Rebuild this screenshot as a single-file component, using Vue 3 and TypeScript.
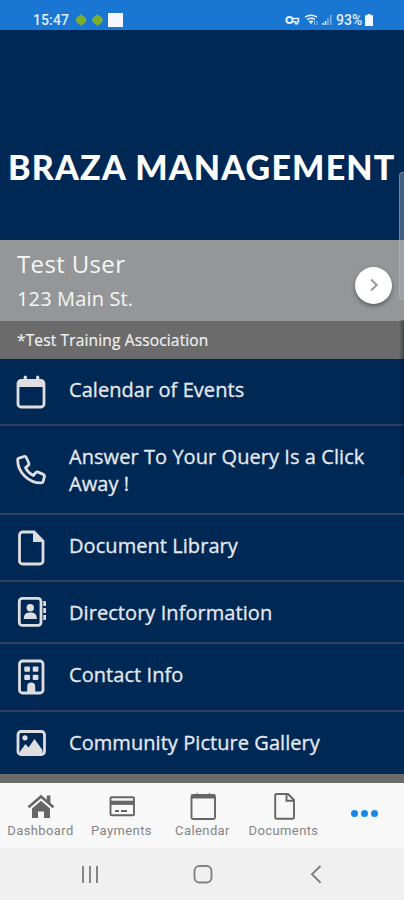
<script setup lang="ts">
interface MenuRow {
  icon: 'calendar' | 'phone' | 'document' | 'directory' | 'building' | 'picture'
  label: string
  height: number
}

const rows: MenuRow[] = [
  { icon: 'calendar', label: 'Calendar of Events', height: 67 },
  { icon: 'phone', label: 'Answer To Your Query Is a Click Away !', height: 89 },
  { icon: 'document', label: 'Document Library', height: 67 },
  { icon: 'directory', label: 'Directory Information', height: 62 },
  { icon: 'building', label: 'Contact Info', height: 68 },
  { icon: 'picture', label: 'Community Picture Gallery', height: 62 },
]

const tabs = [
  { icon: 'home', label: 'Dashboard' },
  { icon: 'card', label: 'Payments' },
  { icon: 'calendar', label: 'Calendar' },
  { icon: 'document', label: 'Documents' },
]
</script>

<template>
  <div class="phone">
    <header class="status">
      <span class="time">15:47</span>
      <svg class="leaves" viewBox="0 0 30 14" fill="#7dad2c">
        <path d="M6 1l2 2 2 1 1.500 3-1.500 3-2 1-2 2-2-2-2-1-1.500-3L2 4l2-1z" />
        <path d="M22.500 1l2 2 2 1 1.500 3-1.500 3-2 1-2 2-2-2-2-1-1.500-3 1.500-3 2-1z" />
      </svg>
      <i class="square"></i>
      <svg class="signals" viewBox="0 0 50 14" fill="none" stroke="#e3efff">
        <circle cx="4.500" cy="7" r="3.100" stroke-width="2" />
        <path d="M7 5.500h6.500v3.200h-1v2h-2v-2H7.500" stroke-width="1.500" />
        <path d="M20 4.200Q26 .2 32 4.200M22 6.600q4-2.600 8 0" stroke-width="1.500" />
        <path d="M24 8h4l-2 2.700z" fill="#e3efff" stroke-width="1" />
        <path d="M29.500 8v4M32 8v4" stroke-width="1" opacity=".6" />
        <path d="M38 12v-2M40.500 12V8" stroke-width="1.600" />
        <path d="M43 12V5M45.800 12V2" stroke-width="1.600" opacity=".5" />
      </svg>
      <span class="charge">93%</span>
      <svg class="battery" viewBox="0 0 8 12" fill="#f3f8ff"><path d="M2.500 0h3v1.300H8V12H0V1.300h2.500z" /></svg>
    </header>

    <section class="brand"><h1>BRAZA MANAGEMENT</h1></section>

    <section class="user">
      <div class="who">
        <div class="name">Test User</div>
        <div class="street">123 Main St.</div>
      </div>
      <button class="go" aria-label="Open">
        <svg viewBox="0 0 12 16"><path d="M3 2.500L8.700 8 3 13.500" fill="none" stroke="#999" stroke-width="2" /></svg>
      </button>
    </section>
    <div class="assoc">*Test Training Association</div>

    <ul class="menu">
      <li v-for="row in rows" :key="row.label" :style="{ height: row.height + 'px' }">
        <svg class="ico" viewBox="0 0 30 36" fill="none" stroke="#dedee0" stroke-width="2.800">
          <template v-if="row.icon === 'calendar'">
            <rect x="2" y="6.500" width="26" height="26.500" rx="3" />
            <path d="M2 6h26v7H2z" fill="#dedee0" stroke="none" />
            <path d="M9.300 3V7M21.700 3V7" stroke-width="3.200" stroke-linecap="round" />
          </template>
          <path
            v-else-if="row.icon === 'phone'"
            stroke-linejoin="round"
            d="M3 6.200L8 4.500Q9.600 4 10.300 5.500L12.800 11Q13.300 12.400 12.200 13.400L9.500 15.700Q12 21 17.400 23.500L19.700 20.700Q20.700 19.500 22.100 20.100L27.300 22.400Q28.800 23.100 28.400 24.700L27.200 29.300Q26.800 30.900 25.200 30.900C12.500 30.900 1.500 20 1.700 7.800Q1.700 6.600 3 6.200Z"
          />
          <template v-else-if="row.icon === 'document'">
            <path d="M6.500 2H18l9 9v20a3 3 0 0 1-3 3H6.500a3 3 0 0 1-3-3V5a3 3 0 0 1 3-3z" />
            <path d="M17 1.500v10.500h10.500z" fill="#dedee0" stroke="none" />
          </template>
          <template v-else-if="row.icon === 'directory'">
            <rect x="3.300" y="4.400" width="21.700" height="27" rx="3" />
            <g fill="#dedee0" stroke="none">
              <circle cx="14.300" cy="13.800" r="3.700" />
              <path d="M7.700 25q0-6.500 5.300-6.500h2.600q5.300 0 5.300 6.500z" />
              <path d="M27.300 7H29q1 0 1 1v4h-2.700zM27.300 14H30v5h-2.700zM27.300 21H30v4q0 1-1 1h-1.700z" />
            </g>
          </template>
          <template v-else-if="row.icon === 'building'">
            <rect x="3.500" y="2" width="23.500" height="32" rx="3" />
            <g fill="#dedee0" stroke="none">
              <rect x="8.300" y="7.500" width="5.700" height="5.200" rx="1" />
              <rect x="16.700" y="7.500" width="5.700" height="5.200" rx="1" />
              <rect x="8.300" y="15.800" width="5.700" height="5.200" rx="1" />
              <rect x="16.700" y="15.800" width="5.700" height="5.200" rx="1" />
              <path d="M11.200 34v-6.500a4 4 0 0 1 8 0V34z" />
            </g>
          </template>
          <template v-else>
            <rect x="2" y="6.500" width="26.500" height="23" rx="3" />
            <g fill="#dedee0" stroke="none">
              <circle cx="9" cy="12.800" r="2.600" />
              <path d="M4 26.500l5.500-7.500 3 3.500 6-8.500 8 11v3H4z" />
            </g>
          </template>
        </svg>
        <span>{{ row.label }}</span>
      </li>
    </ul>

    <nav class="tabs">
      <div v-for="tab in tabs" :key="tab.label" class="tab">
        <svg viewBox="0 0 28 28" fill="none" stroke="#666" stroke-width="1.900">
          <template v-if="tab.icon === 'home'">
            <path d="M1.500 15.300L14 4.500l12.500 10.800" stroke-width="2.600" />
            <path d="M19.800 3.500h3.600v8l-3.600-3z" fill="#666" stroke="none" />
            <path d="M14 8.800l9 7.700V26h-6v-6.500h-6V26H5v-9.500z" fill="#666" stroke="none" />
          </template>
          <template v-else-if="tab.icon === 'card'">
            <rect x="2.500" y="5.300" width="23.500" height="18" rx="1" />
            <path d="M2.500 10.800H26" stroke-width="4.200" />
            <path d="M7 19h4M13 19h6" stroke-width="2" />
          </template>
          <template v-else-if="tab.icon === 'calendar'">
            <rect x="2.500" y="3" width="23.500" height="24" rx="1.500" />
            <path d="M2.500 4.500H26" stroke-width="4" />
            <path d="M8 .8v3M20.500 .8v3" stroke-width="1.600" opacity=".6" />
          </template>
          <template v-else>
            <path d="M6.500 2H18l6 6v17q0 1.800-1.800 1.800H6.500q-1.300 0-1.300-1.800V3.800Q5.200 2 6.500 2z" />
            <path d="M16.500 2v6.800H24" />
          </template>
        </svg>
        <span>{{ tab.label }}</span>
      </div>
      <div class="more"><i></i><i></i><i></i></div>
    </nav>

    <footer class="system">
      <svg viewBox="0 0 404 52" fill="none" stroke="#808080" stroke-width="1.900">
        <path d="M83 18v17M90 18v17M97 18v17" />
        <rect x="194.500" y="18" width="17" height="16.500" rx="5" />
        <path d="M320.500 18l-8.500 8.300 8.500 8.400" />
      </svg>
    </footer>
    <div class="edge-handle"></div>
    <div class="edge-shade"></div>
  </div>
</template>

<style>
body { margin: 0; }
</style>

<style scoped>
* { box-sizing: border-box; }
.phone {
  position: relative;
  width: 404px;
  height: 900px;
  overflow: hidden;
  display: flex;
  flex-direction: column;
  background: #002855;
  font-family: "Open Sans", "Noto Sans", sans-serif;
  color: #e6e8ee;
}
.status {
  height: 30px;
  flex: none;
  display: flex;
  align-items: center;
  padding: 9px 31px 0 33px;
  background: #1976d2;
  font-family: Roboto, sans-serif;
  font-weight: 500;
  font-size: 14px;
  line-height: 20px;
  color: #e3efff;
}
.time { width: 36px; letter-spacing: .1px; }
.leaves { width: 30px; height: 14px; margin-left: 6px; }
.square { width: 15px; height: 14px; margin-left: 3px; background: #f5f9ff; }
.signals { width: 50px; height: 14px; margin-left: auto; }
.charge { width: 28px; margin-left: 1px; letter-spacing: 0; }
.battery { width: 8px; height: 12px; margin-left: 1px; }
.brand {
  height: 210px;
  flex: none;
  padding: 115.500px 0 0 8px;
}
h1 {
  margin: 0;
  font: 900 34px/42px Lato, sans-serif;
  letter-spacing: 1.200px;
  white-space: nowrap;
  color: #fff;
}
.user {
  height: 81px;
  flex: none;
  display: flex;
  justify-content: space-between;
  align-items: center;
  padding: 0 12px 0 17px;
  background: #949698;
  color: #f6f6f6;
}
.name { font-size: 24px; line-height: 37px; letter-spacing: .35px; }
.street { font-size: 20px; line-height: 34px; letter-spacing: .15px; }
.go {
  width: 37px;
  height: 37px;
  margin-top: 9px;
  padding: 0;
  border: 0;
  border-radius: 50%;
  display: grid;
  place-items: center;
  background: #fff;
  box-shadow: 0 2px 4px rgba(0, 0, 0, .4);
}
.go svg { width: 12px; height: 16px; }
.assoc {
  height: 38px;
  flex: none;
  padding-left: 17px;
  background: #6b6b6b;
  color: #f1f1f1;
  font-size: 15.500px;
  letter-spacing: .15px;
  line-height: 38px;
  -webkit-text-stroke: .2px;
}
.menu {
  flex: none;
  margin: 0;
  padding: 0;
  list-style: none;
}
.menu li {
  display: flex;
  align-items: center;
  padding: 0 30px 0 16px;
  border-bottom: 2px solid #343f60;
}
.menu li:last-child { border-bottom: 0; }
.ico { width: 30px; height: 36px; flex: none; }
.menu span {
  align-self: flex-start;
  margin-left: 23px;
  padding-top: 17px;
  font-size: 20px;
  line-height: 27px;
  letter-spacing: .06px;
  -webkit-text-stroke: .3px;
}
.tabs {
  height: 74px;
  flex: none;
  display: flex;
  padding-top: 9px;
  border-top: 9px solid #6b6b6b;
  background: #f8f8f8;
  font-family: Roboto, sans-serif;
  color: #858585;
}
.tab {
  width: 81px;
  display: flex;
  flex-direction: column;
  align-items: center;
}
.tab svg { width: 28px; height: 28px; }
.tab span {
  font-size: 13px;
  line-height: 18px;
  letter-spacing: .4px;
  margin-top: 2px;
}
.more {
  width: 80px;
  height: 42px;
  display: flex;
  justify-content: center;
  align-items: center;
  gap: 3px;
}
.more i { width: 7px; height: 7px; border-radius: 50%; background: #1688e8; }
.system { height: 52px; flex: none; background: #f0f0f0; }
.system svg { width: 404px; height: 52px; display: block; }
.edge-handle {
  position: absolute;
  left: 399px;
  top: 172px;
  width: 8px;
  height: 128px;
  border-radius: 4px;
  border: 1px solid rgba(190, 195, 205, .4);
  background: rgba(170, 175, 185, .4);
}
.edge-shade {
  position: absolute;
  left: 399px;
  top: 320px;
  width: 5px;
  height: 155px;
  background: linear-gradient(90deg, transparent, rgba(0, 10, 30, .4));
}
</style>
